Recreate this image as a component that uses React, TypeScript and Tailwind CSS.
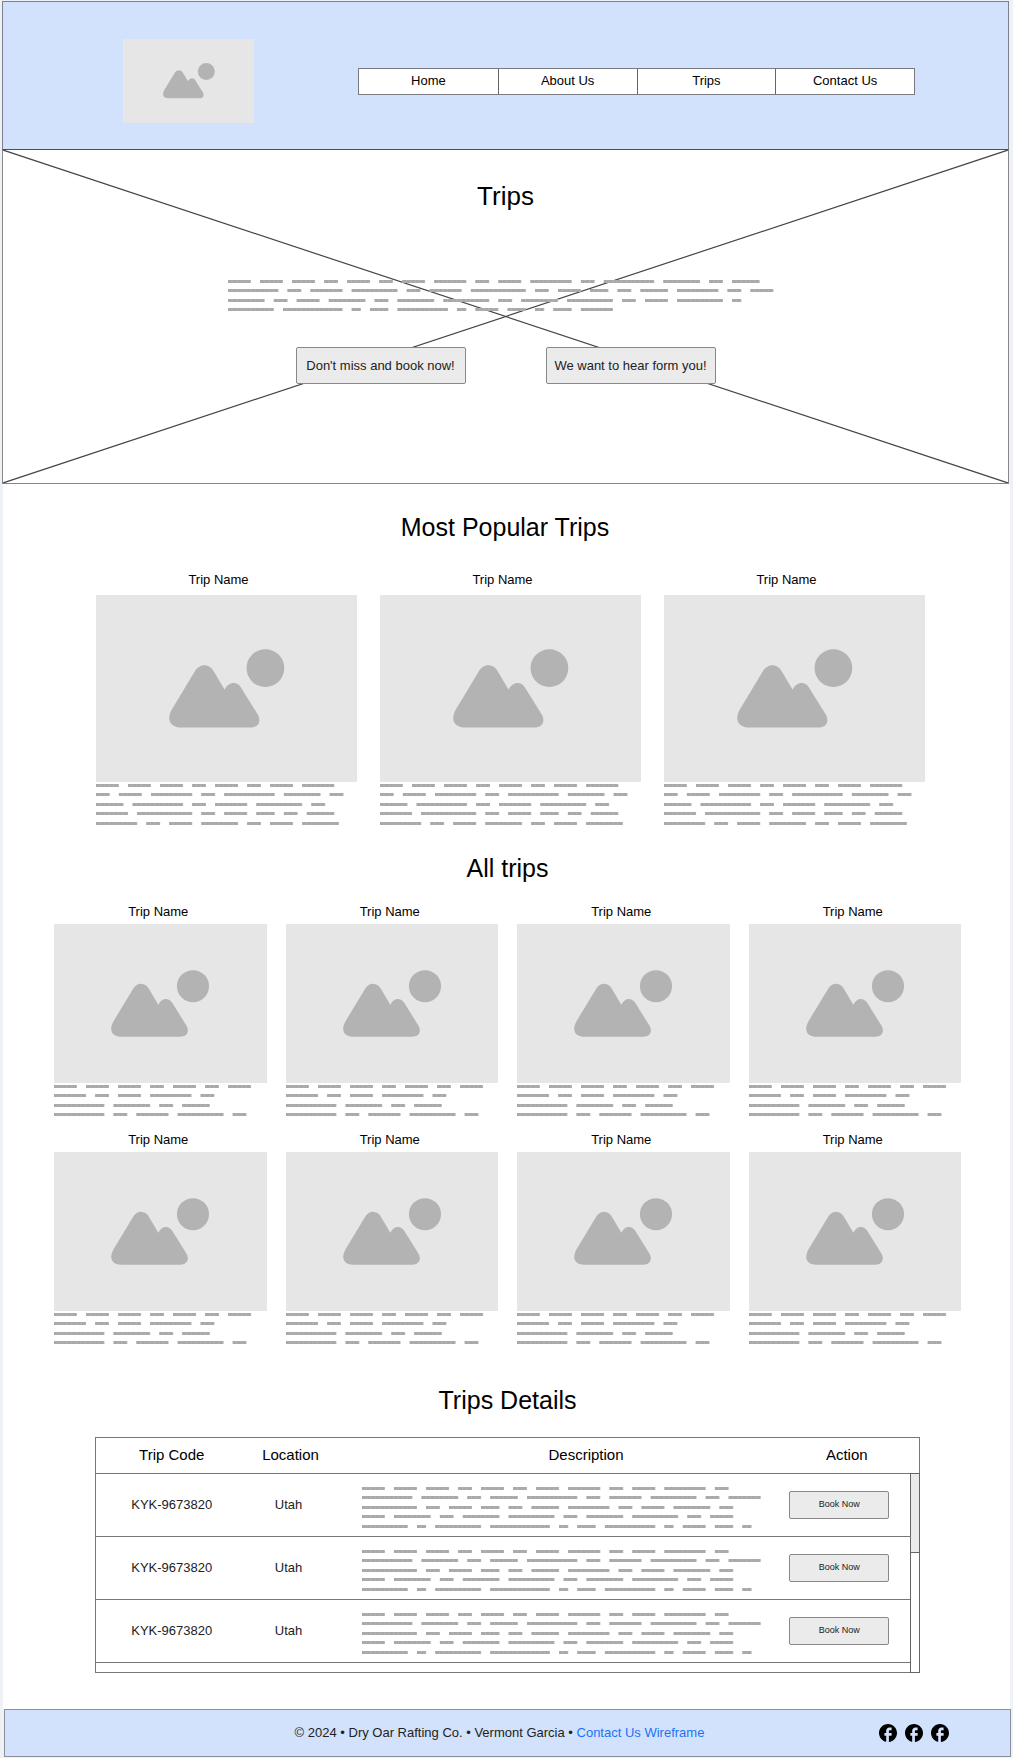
import React from "react";

const UNIT = 55 / 12;

const HERO_COPY = [
  [5, 5, 5, 3, 5, 3, 5, 7, 3, 5, 9, 3, 11, 8, 3, 6],
  [11, 3, 7, 10, 3, 7, 12, 3, 5, 4, 3, 6, 9, 3, 5],
  [8, 3, 5, 8, 3, 8, 10, 3, 8, 10, 3, 5, 10, 2],
  [10, 13, 2, 4, 11, 2, 5, 4, 2, 4, 7],
];

const POPULAR_COPY = [
  [5, 5, 5, 3, 5, 3, 5, 7],
  [3, 5, 9, 3, 11, 8, 3],
  [6, 11, 3, 7, 10, 3],
  [7, 12, 3, 5, 4, 3, 6],
  [9, 3, 5, 8, 3, 5, 8],
];

const TRIP_COPY = [
  [5, 5, 5, 3, 5, 3, 5],
  [7, 3, 5, 9, 3],
  [11, 8, 3, 6],
  [11, 3, 7, 10, 3],
];

const DETAIL_COPY = [
  [5, 5, 5, 3, 5, 3, 5, 7, 3, 5, 9, 3],
  [11, 8, 3, 6, 11, 3, 7, 10, 3, 7],
  [12, 3, 5, 4, 3, 6, 9, 3, 5, 8, 3],
  [5, 8, 3, 8, 10, 3, 8, 10, 3, 5],
  [10, 2, 10, 13, 2, 4, 11, 2, 5, 4, 2],
];

/** Placeholder copy: every number is a word length, drawn as a grey dash with faint letter seams. */
function Greeking({ lines }: { lines: number[][] }) {
  const units = Math.max(
    ...lines.map((l) => l.reduce((a, b) => a + b, 0) + (l.length - 1) * 2),
  );
  const width = Math.ceil(units * UNIT);
  const height = Math.round((lines.length - 1) * 9.4) + 3;
  return (
    <svg
      width={width}
      height={height}
      viewBox={`0 0 ${width} ${height}`}
      className="block max-w-full"
      aria-hidden="true"
    >
      {lines.map((line, row) => {
        let at = 0;
        const y = Math.round(row * 9.4) + 1.5;
        return line.map((n, i) => {
          const from = at * UNIT;
          const to = (at + n) * UNIT;
          at += n + 2;
          return (
            <g key={`${row}-${i}`} strokeWidth={3}>
              <path d={`M${from} ${y}H${to}`} stroke="#b4b4b4" />
              <path
                d={`M${from} ${y}H${to}`}
                stroke="#a9a9a9"
                strokeDasharray={`${UNIT - 0.9} 0.9`}
              />
            </g>
          );
        });
      })}
    </svg>
  );
}

function Picture({ className }: { className: string }) {
  return (
    <div
      role="img"
      aria-label="Image placeholder"
      className={`flex items-center justify-center bg-[#e6e6e6] ${className}`}
    >
      <svg
        viewBox="0 0 116 79"
        className="h-[42%] w-auto overflow-visible"
        fill="#b3b3b3"
      >
        <path d="M25.7 23C30.5 14 41 14 45.7 23.7L56 41C60 32.3 69 32.3 73 39.7L89 65.5C93 72 91 79 81.3 79H13C1 79-3 71 3 60.5Z" />
        <circle cx="97" cy="19.2" r="19" />
      </svg>
    </div>
  );
}

function FacebookIcon() {
  return (
    <svg viewBox="2 2 20 20" className="size-[18px]" fill="#000">
      <path d="M22 12c0-5.52-4.48-10-10-10S2 6.48 2 12c0 4.84 3.44 8.87 8 9.8V15H8v-3h2V9.5C10 7.57 11.57 6 13.5 6H16v3h-2c-.55 0-1 .45-1 1v2h3v3h-3v6.95c5.05-.5 9-4.76 9-9.95z" />
    </svg>
  );
}

const NAV = ["Home", "About Us", "Trips", "Contact Us"];

function Header() {
  return (
    <header className="flex items-center border border-[#7c828c] border-b-[#4d4f54] bg-[#d3e2fc] pt-[37px] pr-[93px] pb-[26px] pl-[120px]">
      <Picture className="h-[84px] w-[131px] shrink-0" />
      <nav className="ml-[104px] grid flex-1 grid-cols-4 border border-[#777a80] bg-white">
        {NAV.map((label) => (
          <a
            key={label}
            href="#"
            className="border-l border-[#666] pt-0.5 pb-[3px] text-center text-[13px] leading-5 first:border-l-0"
          >
            {label}
          </a>
        ))}
      </nav>
    </header>
  );
}

function HeroButton({ children }: { children: React.ReactNode }) {
  return (
    <button
      type="button"
      className="h-[37px] w-[170px] rounded-[2px] border border-[#888] bg-[#ebebeb] text-[13px] whitespace-nowrap text-[#222]"
    >
      {children}
    </button>
  );
}

function Hero() {
  return (
    <section className="relative border-x border-b border-[#888]">
      <svg
        className="absolute inset-0 size-full"
        viewBox="0 0 100 100"
        preserveAspectRatio="none"
        aria-hidden="true"
      >
        <path
          d="M0 0L100 100M100 0L0 100"
          stroke="#444"
          strokeWidth="1.2"
          vectorEffect="non-scaling-stroke"
        />
      </svg>
      <div className="relative flex flex-col items-center pt-[30px] pb-[99px]">
        <h1 className="text-[26px] leading-8">Trips</h1>
        <div className="mt-[68px] w-[555px]">
          <Greeking lines={HERO_COPY} />
        </div>
        <div className="mt-9 flex gap-20">
          <HeroButton>Don't miss and book now!</HeroButton>
          <HeroButton>We want to hear form you!</HeroButton>
        </div>
      </div>
    </section>
  );
}

function PopularTrips() {
  return (
    <section className="pt-[27px] pr-[85px] pl-[93px]">
      <h2 className="pr-[11px] text-center text-[25px] leading-8">
        Most Popular Trips
      </h2>
      <div className="mt-[27px] grid grid-cols-3 gap-[23px]">
        {[0, 1, 2].map((i) => (
          <article key={i}>
            <h3 className="pr-4 text-center text-[13px] leading-5">
              Trip Name
            </h3>
            <Picture className="mt-[5px] mb-0.5 h-[187px]" />
            <Greeking lines={POPULAR_COPY} />
          </article>
        ))}
      </div>
    </section>
  );
}

function AllTrips() {
  return (
    <section className="pt-[27px] pr-[49px] pl-[51px]">
      <h2 className="text-center text-[25px] leading-8">All trips</h2>
      <div className="mt-[18px] grid grid-cols-4 gap-x-[19px] gap-y-[14px]">
        {[0, 1, 2, 3, 4, 5, 6, 7].map((i) => (
          <article key={i}>
            <h3 className="pr-1 text-center text-[13px] leading-5">
              Trip Name
            </h3>
            <Picture className="mt-0.5 mb-0.5 h-[159px]" />
            <Greeking lines={TRIP_COPY} />
          </article>
        ))}
      </div>
    </section>
  );
}

function TripDetails() {
  return (
    <section className="pt-10 pr-[90px] pb-9 pl-[92px]">
      <h2 className="text-center text-[25px] leading-8">Trips Details</h2>
      <table className="mt-[21px] w-full table-fixed border-collapse border border-[#777] text-center text-[13px] text-[#222]">
        <colgroup>
          <col className="w-[152px]" />
          <col className="w-[86px]" />
          <col />
          <col className="w-[128px]" />
          <col className="w-[9px]" />
        </colgroup>
        <thead>
          <tr className="h-9 border-b border-[#777] text-[15px] text-black">
            <th className="font-normal">Trip Code</th>
            <th className="font-normal">Location</th>
            <th className="pl-14 font-normal">Description</th>
            <th colSpan={2} className="pr-2 font-normal">
              Action
            </th>
          </tr>
        </thead>
        <tbody>
          {[0, 1, 2].map((i) => (
            <tr key={i} className="h-[63px]">
              <td className="border-b border-[#777]">KYK-9673820</td>
              <td className="border-b border-[#777] pr-1">Utah</td>
              <td className="border-b border-[#777] pt-1 pl-7">
                <Greeking lines={DETAIL_COPY} />
              </td>
              <td className="border-b border-[#777] pr-3.5">
                <button
                  type="button"
                  className="h-7 w-[100px] rounded-[2px] border border-[#888] bg-[#ebebeb] text-[9px]"
                >
                  Book Now
                </button>
              </td>
              {i === 0 && (
                <td rowSpan={4} className="border border-[#666] align-top">
                  <div className="h-[79px] border-b border-[#666] bg-[#ebebeb]" />
                </td>
              )}
            </tr>
          ))}
          <tr className="h-[10px]">
            <td colSpan={4} />
          </tr>
        </tbody>
      </table>
    </section>
  );
}

function Footer() {
  return (
    <footer className="flex h-[48px] items-center border border-[#8a909b] bg-[#d3e2fc] pr-[61px] pl-[115px]">
      <p className="flex-1 text-center text-[13px] leading-5 text-[#222]">
        © 2024 • Dry Oar Rafting Co. • Vermont Garcia •{" "}
        <a href="#" className="text-[#1a73f5]">
          Contact Us Wireframe
        </a>
      </p>
      <div className="flex gap-2">
        {[0, 1, 2].map((i) => (
          <a key={i} href="#" aria-label="Facebook">
            <FacebookIcon />
          </a>
        ))}
      </div>
    </footer>
  );
}

export default function App() {
  return (
    <div className="bg-[#eef1f6] pt-px pb-0.5 font-['Liberation_Sans',Arial,sans-serif] text-black">
      <div className="mr-1 ml-0.5 bg-white">
        <Header />
        <Hero />
      </div>
      <main className="mr-[3px] ml-[3px] bg-white">
        <PopularTrips />
        <AllTrips />
        <TripDetails />
      </main>
      <div className="mr-0.5 ml-1">
        <Footer />
      </div>
    </div>
  );
}
